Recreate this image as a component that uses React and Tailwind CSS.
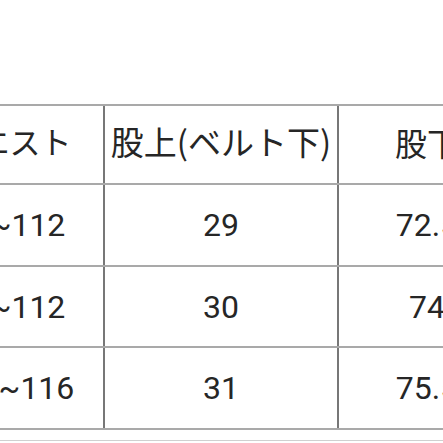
export default function App() {
  const rows = [
    { waist: '96~112', rise: '29', inseam: '72.5' },
    { waist: '96~112', rise: '30', inseam: '74' },
    { waist: '100~116', rise: '31', inseam: '75.5' },
  ];

  return (
    <div className="w-[443px] h-[443px] overflow-hidden bg-white pt-[104px]">
      <div className="ml-[-84px] w-[600px] text-[#262626]">
        {/* Header */}
        <div className="grid grid-cols-[189px_234px_176px] border-y-2 border-[#a9a9a9] h-[81px] font-['Noto_Sans_CJK_JP',sans-serif] text-[33px]">
          <div className="border-r-2 border-[#777] flex items-center justify-center pb-[6px] text-[31px]">ウエスト</div>
          <div className="border-r-2 border-[#777] flex items-center justify-center pb-[6px] whitespace-nowrap">股上(ベルト下)</div>
          <div className="flex items-center justify-center pb-[6px] whitespace-nowrap text-[32px]">股下</div>
        </div>

        {rows.map((r, i) => (
          <div
            key={i}
            className={`grid grid-cols-[189px_234px_176px] border-b-2 border-[#a9a9a9] font-['Roboto',sans-serif] text-[32px] ${
              i === 1 ? 'h-[81px]' : 'h-[82px]'
            }`}
          >
            <div className="border-r-2 border-[#777] flex items-center justify-center">{r.waist}</div>
            <div className="border-r-2 border-[#777] flex items-center justify-center">{r.rise}</div>
            <div className="flex items-center justify-center">{r.inseam}</div>
          </div>
        ))}
      </div>
      <div className="mt-[10px] border-t border-[#d0d0d0]" />
    </div>
  );
}
